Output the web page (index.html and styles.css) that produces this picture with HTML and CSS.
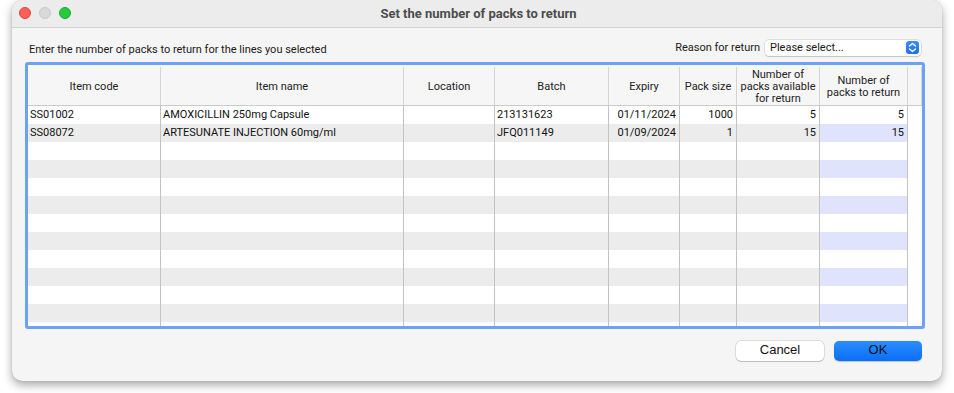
FILE: index.html
```html
<!DOCTYPE html>
<html>
<head>
<meta charset="utf-8">
<title>Set the number of packs to return</title>
<link rel="stylesheet" href="styles.css">
</head>
<body>
<div class="window">
  <div class="titlebar">
    <div class="lights">
      <span class="light red"></span>
      <span class="light gray"></span>
      <span class="light green"></span>
    </div>
    <div class="title">Set the number of packs to return</div>
  </div>
  <div class="content">
    <div class="toprow">
      <div class="hint">Enter the number of packs to return for the lines you selected</div>
      <div class="reason">
        <span class="reason-label">Reason for return</span>
        <div class="select">
          <span class="select-text">Please select...</span>
          <span class="stepper">
            <svg width="9" height="11" viewBox="0 0 9 11"><path d="M1.5 4 L4.5 1.5 L7.5 4 M1.5 7 L4.5 9.5 L7.5 7" fill="none" stroke="#fff" stroke-width="1.4" stroke-linecap="round" stroke-linejoin="round"/></svg>
          </span>
        </div>
      </div>
    </div>
    <div class="grid-box">
      <div class="row head">
        <div class="c">Item code</div>
        <div class="c">Item name</div>
        <div class="c">Location</div>
        <div class="c">Batch</div>
        <div class="c">Expiry</div>
        <div class="c">Pack size</div>
        <div class="c">Number of<br>packs available<br>for return</div>
        <div class="c">Number of<br>packs to return</div>
        <div class="c"></div>
      </div>
      <div class="rows">
        <div class="row">
          <div class="c">SS01002</div><div class="c">AMOXICILLIN 250mg Capsule</div><div class="c"></div><div class="c">213131623</div><div class="c r">01/11/2024</div><div class="c r">1000</div><div class="c r">5</div><div class="c r edit">5</div><div class="c f"></div>
        </div>
        <div class="row">
          <div class="c">SS08072</div><div class="c">ARTESUNATE INJECTION 60mg/ml</div><div class="c"></div><div class="c">JFQ011149</div><div class="c r">01/09/2024</div><div class="c r">1</div><div class="c r">15</div><div class="c r edit">15</div><div class="c f"></div>
        </div>
        <div class="row"><div class="c"></div><div class="c"></div><div class="c"></div><div class="c"></div><div class="c"></div><div class="c"></div><div class="c"></div><div class="c edit"></div><div class="c f"></div></div>
        <div class="row"><div class="c"></div><div class="c"></div><div class="c"></div><div class="c"></div><div class="c"></div><div class="c"></div><div class="c"></div><div class="c edit"></div><div class="c f"></div></div>
        <div class="row"><div class="c"></div><div class="c"></div><div class="c"></div><div class="c"></div><div class="c"></div><div class="c"></div><div class="c"></div><div class="c edit"></div><div class="c f"></div></div>
        <div class="row"><div class="c"></div><div class="c"></div><div class="c"></div><div class="c"></div><div class="c"></div><div class="c"></div><div class="c"></div><div class="c edit"></div><div class="c f"></div></div>
        <div class="row"><div class="c"></div><div class="c"></div><div class="c"></div><div class="c"></div><div class="c"></div><div class="c"></div><div class="c"></div><div class="c edit"></div><div class="c f"></div></div>
        <div class="row"><div class="c"></div><div class="c"></div><div class="c"></div><div class="c"></div><div class="c"></div><div class="c"></div><div class="c"></div><div class="c edit"></div><div class="c f"></div></div>
        <div class="row"><div class="c"></div><div class="c"></div><div class="c"></div><div class="c"></div><div class="c"></div><div class="c"></div><div class="c"></div><div class="c edit"></div><div class="c f"></div></div>
        <div class="row"><div class="c"></div><div class="c"></div><div class="c"></div><div class="c"></div><div class="c"></div><div class="c"></div><div class="c"></div><div class="c edit"></div><div class="c f"></div></div>
        <div class="row"><div class="c"></div><div class="c"></div><div class="c"></div><div class="c"></div><div class="c"></div><div class="c"></div><div class="c"></div><div class="c edit"></div><div class="c f"></div></div>
        <div class="row"><div class="c"></div><div class="c"></div><div class="c"></div><div class="c"></div><div class="c"></div><div class="c"></div><div class="c"></div><div class="c edit"></div><div class="c f"></div></div>
        <div class="row filler"><div class="c"></div><div class="c"></div><div class="c"></div><div class="c"></div><div class="c"></div><div class="c"></div><div class="c"></div><div class="c"></div><div class="c f"></div></div>
      </div>
    </div>
    <div class="buttons">
      <button class="btn cancel">Cancel</button>
      <button class="btn ok">OK</button>
    </div>
  </div>
</div>
</body>
</html>
```
FILE: styles.css
```css
* { box-sizing: border-box; }
html, body { margin: 0; padding: 0; background: #ffffff; }
body { width: 954px; height: 393px; overflow: hidden; font-family: "Roboto", "DejaVu Sans", sans-serif; }

.window {
  margin-left: 12px;
  width: 930px;
  height: 381px;
  background: #f5f5f5;
  border-radius: 10px;
  box-shadow: 0 4px 10px rgba(0,0,0,0.35), 0 0 1px rgba(0,0,0,0.3);
  overflow: hidden;
  display: flex;
  flex-direction: column;
}

.titlebar {
  height: 28px;
  flex: none;
  background: #ececec;
  border-bottom: 1px solid #d3d3d3;
  display: flex;
  align-items: center;
}
.lights { display: flex; gap: 8px; padding-left: 7px; margin-top: -1px; }
.light { width: 12px; height: 12px; border-radius: 50%; display: block; }
.light.red { background: #fe5f57; border: 0.5px solid #e0443e; }
.light.gray { background: #d9d9d9; border: 0.5px solid #c8c8c8; }
.light.green { background: #28c840; border: 0.5px solid #1aab29; }
.title {
  flex: 1;
  text-align: center;
  margin-left: -56px;
  font-family: "Roboto", "Inter", sans-serif;
  font-weight: 700;
  font-size: 13px;
  color: #4d4d4d;
  margin-top: -1px;
}

.content {
  flex: 1;
  display: flex;
  flex-direction: column;
  padding: 0 17px 0 13px;
}

.toprow {
  height: 34px;
  display: flex;
  align-items: center;
  justify-content: space-between;
  padding-top: 5px;
  font-size: 11px;
  color: #1a1a1a;
}
.hint { padding-left: 4px; padding-top: 4px; }
.reason { display: flex; align-items: center; gap: 5px; margin-right: 4px; }
.select {
  width: 156px;
  height: 16px;
  background: #fff;
  border-radius: 4px;
  box-shadow: 0 0 0 0.5px rgba(0,0,0,0.18), 0 1px 1px rgba(0,0,0,0.12);
  display: flex;
  align-items: center;
  justify-content: space-between;
  padding-left: 5px;
  padding-right: 2px;
}
.select-text { font-size: 11px; color: #1a1a1a; }
.stepper {
  width: 13px;
  height: 13px;
  border-radius: 3px;
  background: linear-gradient(#3d8cf7, #1f6fe8);
  display: flex;
  align-items: center;
  justify-content: center;
}

.grid-box {
  height: 267px;
  border: 3px solid #6ba2f4;
  border-radius: 3px;
  background: #fff;
  display: flex;
  flex-direction: column;
  font-size: 11px;
  color: #111;
}

.row {
  display: grid;
  grid-template-columns: 133px 243px 91px 114px 71px 57px 83px 88px 14px;
  height: 18px;
}
.row .c {
  border-right: 1px solid #c3c3c3;
  padding: 0 3px 0 2px;
  line-height: 18px;
  white-space: nowrap;
  overflow: hidden;
}
.row .c.f { border-right: none; }
.row .c.r { text-align: right; }

.row.head {
  height: 41px;
  background: #f6f6f6;
  border-bottom: 1px solid #cbcbcb;
  flex: none;
}
.row.head .c {
  display: flex;
  align-items: center;
  justify-content: center;
  text-align: center;
  line-height: 12px;
  border-right: 1px solid #d4d4d4;
  margin-top: 2px;
  padding: 1px 0 0 0;
  color: #222;
}

.rows { flex: 1; display: flex; flex-direction: column; }
.rows .row:nth-child(even) { background: #ececec; }
.rows .row:nth-child(even) .c.edit { background: #dfe3fb; }
.rows .row:nth-child(even) .c.f { background: #fff; }
.rows .row.filler { flex: 1; background: #fff; }

.buttons {
  display: flex;
  justify-content: flex-end;
  gap: 10px;
  margin-top: 12px;
  padding-right: 3px;
}
.btn {
  width: 88px;
  height: 20px;
  border-radius: 5px;
  font-family: "Liberation Sans", Arial, sans-serif;
  font-size: 13px;
  line-height: 18px;
  color: #111;
  border: none;
  padding: 0 0 2px 0;
}
.btn.cancel {
  background: #fff;
  box-shadow: 0 0 0 0.5px rgba(0,0,0,0.2), 0 1px 1px rgba(0,0,0,0.15);
}
.btn.ok {
  background: linear-gradient(#2a8dfd, #0a6ff7);
  box-shadow: 0 0.5px 1px rgba(0,0,0,0.2);
}
```
